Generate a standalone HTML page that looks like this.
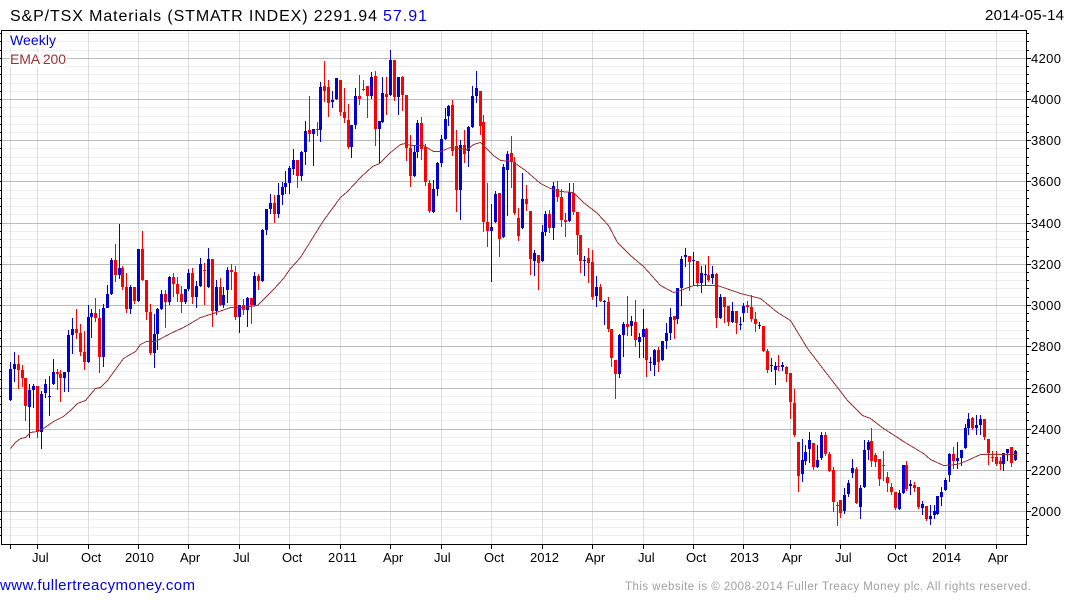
<!DOCTYPE html>
<html><head><meta charset="utf-8"><title>S&amp;P/TSX Materials</title>
<style>html,body{margin:0;padding:0;background:#fff}svg{display:block}text{font-family:"Liberation Sans",Arial,sans-serif}</style></head>
<body>
<svg xmlns="http://www.w3.org/2000/svg" width="1075" height="600" viewBox="0 0 1075 600">
<rect width="1075" height="600" fill="#fff"/>
<path fill="none" stroke="#eee" d="M2 33.5H1026M2 41.5H1026M2 50.5H1026M2 66.5H1026M2 74.5H1026M2 83.5H1026M2 91.5H1026M2 107.5H1026M2 116.5H1026M2 124.5H1026M2 132.5H1026M2 148.5H1026M2 157.5H1026M2 165.5H1026M2 173.5H1026M2 190.5H1026M2 198.5H1026M2 206.5H1026M2 214.5H1026M2 231.5H1026M2 239.5H1026M2 247.5H1026M2 256.5H1026M2 272.5H1026M2 280.5H1026M2 288.5H1026M2 297.5H1026M2 313.5H1026M2 321.5H1026M2 330.5H1026M2 338.5H1026M2 354.5H1026M2 363.5H1026M2 371.5H1026M2 379.5H1026M2 396.5H1026M2 404.5H1026M2 412.5H1026M2 420.5H1026M2 437.5H1026M2 445.5H1026M2 453.5H1026M2 461.5H1026M2 478.5H1026M2 486.5H1026M2 494.5H1026M2 502.5H1026M2 519.5H1026M2 527.5H1026M2 535.5H1026"/>
<path fill="none" stroke="#ddd" d="M10.5 31V544M37.5 31V544M88.5 31V544M138.5 31V544M188.5 31V544M239.5 31V544M289.5 31V544M340.5 31V544M390.5 31V544M441.5 31V544M491.5 31V544M542.5 31V544M592.5 31V544M643.5 31V544M693.5 31V544M743.5 31V544M790.5 31V544M840.5 31V544M895.5 31V544M945.5 31V544M996.5 31V544"/>
<path fill="none" stroke="#bbb" d="M2 58.5H1026M2 99.5H1026M2 140.5H1026M2 181.5H1026M2 223.5H1026M2 264.5H1026M2 305.5H1026M2 346.5H1026M2 388.5H1026M2 429.5H1026M2 470.5H1026M2 511.5H1026"/>
<rect x="10" y="33" width="47" height="15" fill="#fff"/>
<rect x="10" y="52" width="57" height="15" fill="#fff"/>
<path fill="none" stroke="#0000d8" d="M10.5 362V401M14.5 352V382M29.5 384V438M33.5 384V408M41.5 391V449M45.5 379V398M49.5 376V416M53.5 359V385M64.5 372V392M68.5 330V392M72.5 318V354M88.5 305V363M91.5 309V338M103.5 304V367M107.5 285V308M111.5 258V295M119.5 224V279M130.5 285V314M138.5 249V302M154.5 314V368M157.5 308V350M161.5 290V310M169.5 276V305M185.5 289V304M188.5 269V291M196.5 281V308M200.5 258V287M208.5 248V288M216.5 280V315M223.5 287V308M227.5 267V303M239.5 305V333M247.5 297V327M254.5 272V306M262.5 229V282M266.5 209V235M270.5 194V214M278.5 183V218M282.5 182V205M285.5 171V194M289.5 166V194M293.5 149V175M301.5 151V181M305.5 121V165M313.5 129V166M320.5 82V142M332.5 91V108M336.5 78V100M351.5 125V158M355.5 88V129M371.5 72V99M379.5 121V164M382.5 77V123M390.5 50V96M398.5 77V115M414.5 146V177M417.5 120V158M433.5 180V213M437.5 162V196M441.5 135V167M445.5 108V140M448.5 105V126M460.5 140V220M468.5 126V167M472.5 86V128M476.5 71V103M491.5 204V282M495.5 191V223M503.5 164V238M507.5 151V216M522.5 173V229M534.5 250V276M542.5 225V262M545.5 211V236M553.5 182V240M569.5 183V222M584.5 256V276M596.5 276V307M604.5 300V325M619.5 334V378M623.5 322V357M631.5 316V336M639.5 333V358M643.5 309V358M650.5 357V371M654.5 349V376M662.5 341V361M666.5 323V349M670.5 308V340M677.5 288V324M681.5 256V306M685.5 248V267M693.5 252V286M701.5 266V293M705.5 265V286M712.5 266V284M720.5 294V319M732.5 302V323M740.5 317V330M743.5 303V322M759.5 322V329M771.5 358V372M775.5 362V385M782.5 362V371M802.5 439V482M805.5 445V465M809.5 432V463M817.5 445V468M821.5 432V460M844.5 488V514M848.5 480V497M852.5 459V478M860.5 485V519M864.5 440V488M868.5 440V460M899.5 490V510M903.5 465V494M910.5 480V495M922.5 501V515M930.5 505V525M934.5 505V519M937.5 496V515M941.5 487V506M945.5 478V491M949.5 453V482M957.5 442V469M961.5 450V466M965.5 424V449M968.5 413V435M976.5 415V435M980.5 415V435M1003.5 453V471M1007.5 449V461M1015.5 450V461"/>
<path fill="none" stroke="#0000d8" stroke-width="3" d="M10.5 369V400M14.5 364V369M29.5 390V407M33.5 386V390M41.5 394V432M45.5 384V393M49.5 396V397M53.5 372V384M64.5 372V378M68.5 335V372M72.5 329V335M88.5 317V362M91.5 313V317M103.5 308V357M107.5 294V308M111.5 260V294M119.5 268V275M130.5 287V309M138.5 249V301M154.5 334V353M157.5 309V334M161.5 294V309M169.5 277V302M185.5 289V302M188.5 273V289M196.5 286V297M200.5 264V286M208.5 259V287M216.5 287V311M223.5 295V305M227.5 270V290M239.5 305V317M247.5 298V310M254.5 276V305M262.5 230V281M266.5 209V230M270.5 203V209M278.5 195V214M282.5 187V195M285.5 183V187M289.5 168V183M293.5 160V169M301.5 152V176M305.5 131V152M313.5 129V134M320.5 87V130M332.5 100V102M336.5 78V99M351.5 125V147M355.5 96V125M371.5 77V96M379.5 121V129M382.5 93V122M390.5 60V95M398.5 77V97M414.5 152V176M417.5 123V152M433.5 189V212M437.5 163V189M441.5 139V163M445.5 119V139M448.5 106V116M460.5 145V190M468.5 127V151M472.5 96V127M476.5 88V96M491.5 227V231M495.5 194V222M503.5 167V237M507.5 154V170M522.5 199V228M534.5 253V261M542.5 232V261M545.5 214V232M553.5 186V228M569.5 192V221M584.5 260V261M596.5 287V296M604.5 301V302M619.5 335V374M623.5 324V335M631.5 321V326M639.5 337V342M643.5 329V337M650.5 362V363M654.5 350V365M662.5 341V360M666.5 333V341M670.5 317V333M677.5 288V319M681.5 259V288M685.5 255V257M693.5 260V261M701.5 273V283M705.5 274V275M712.5 274V278M720.5 297V318M732.5 311V322M740.5 324V325M743.5 306V313M759.5 325V326M771.5 365V366M775.5 366V370M782.5 365V367M802.5 460V474M805.5 452V461M809.5 440V449M817.5 460V467M821.5 435V458M844.5 495V511M848.5 483V494M852.5 468V473M860.5 488V507M864.5 450V487M868.5 442V450M899.5 493V509M903.5 465V493M910.5 484V486M922.5 504V508M930.5 516V519M934.5 511V515M937.5 496V514M941.5 492V497M945.5 480V490M949.5 454V475M957.5 458V461M961.5 450V458M965.5 428V448M968.5 419V428M976.5 425V428M980.5 419V425M1003.5 453V464M1007.5 449V453M1015.5 451V460"/>
<path fill="none" stroke="#f00" d="M18.5 355V389M22.5 365V387M25.5 378V421M37.5 386V438M57.5 369V390M60.5 370V402M76.5 309V339M80.5 324V356M84.5 331V370M95.5 298V322M99.5 309V373M115.5 244V282M122.5 266V290M126.5 273V313M134.5 287V304M142.5 231V281M146.5 280V320M150.5 304V355M165.5 290V328M173.5 273V297M177.5 277V302M181.5 286V313M192.5 268V304M204.5 263V305M212.5 259V327M220.5 278V306M231.5 264V290M235.5 266V320M243.5 299V315M251.5 298V324M258.5 274V290M274.5 195V223M297.5 160V188M309.5 96V142M317.5 122V136M324.5 61V102M328.5 80V117M340.5 80V116M344.5 88V123M348.5 104V149M359.5 75V105M363.5 80V91M367.5 86V118M375.5 71V146M386.5 77V115M394.5 60V101M402.5 76V111M406.5 95V161M410.5 135V187M421.5 117V160M425.5 144V186M429.5 180V213M452.5 100V156M456.5 130V212M464.5 130V163M480.5 91V135M483.5 115V232M487.5 183V247M499.5 193V257M511.5 136V188M514.5 157V215M518.5 208V241M526.5 185V211M530.5 211V275M538.5 255V290M549.5 210V233M557.5 181V202M561.5 189V227M565.5 213V237M573.5 183V215M577.5 212V255M580.5 235V273M588.5 248V283M592.5 250V300M600.5 284V302M608.5 297V332M611.5 329V367M615.5 360V399M627.5 296V336M635.5 300V347M646.5 328V377M658.5 347V372M674.5 316V339M689.5 256V291M697.5 261V287M708.5 256V282M716.5 273V328M724.5 297V323M728.5 306V326M736.5 311V334M747.5 301V313M751.5 295V322M755.5 312V332M763.5 326V352M767.5 349V373M778.5 355V371M786.5 366V382M790.5 373V419M794.5 389V437M798.5 442V492M813.5 443V470M825.5 432V456M829.5 452V472M833.5 467V512M837.5 502V526M840.5 500V518M856.5 467V504M871.5 428V467M875.5 453V467M879.5 459V486M883.5 451V481M887.5 472V492M891.5 483V495M895.5 492V510M906.5 461V491M914.5 482V492M918.5 487V509M926.5 506V521M953.5 447V469M972.5 417V430M984.5 419V440M988.5 439V465M992.5 451V462M996.5 451V466M1000.5 457V470M1011.5 447V467"/>
<path fill="none" stroke="#f00" stroke-width="3" d="M18.5 364V370M22.5 370V378M25.5 378V406M37.5 386V432M57.5 372V374M60.5 374V378M76.5 329V333M80.5 333V352M84.5 352V362M95.5 313V318M99.5 318V357M115.5 260V275M122.5 268V287M126.5 287V309M134.5 287V301M142.5 249V280M146.5 280V312M150.5 312V353M165.5 294V302M173.5 277V284M177.5 284V294M181.5 294V302M192.5 273V297M204.5 270V271M212.5 259V311M220.5 287V305M231.5 270V272M235.5 272V317M243.5 305V310M251.5 298V305M258.5 276V281M274.5 203V214M297.5 160V176M309.5 130V134M317.5 129V130M324.5 86V91M328.5 87V103M340.5 80V112M344.5 112V118M348.5 120V147M359.5 96V99M363.5 89V90M367.5 86V96M375.5 76V129M386.5 94V97M394.5 60V97M402.5 77V95M406.5 95V148M410.5 148V176M421.5 123V149M425.5 147V182M429.5 183V211M452.5 105V151M456.5 146V190M464.5 145V154M480.5 91V126M483.5 122V222M487.5 222V231M499.5 193V239M511.5 153V161M514.5 162V213M518.5 218V236M526.5 199V204M530.5 211V259M538.5 255V263M549.5 214V228M557.5 189V197M561.5 197V220M565.5 220V222M573.5 193V212M577.5 212V235M580.5 235V261M588.5 258V263M592.5 262V297M600.5 287V301M608.5 302V329M611.5 329V358M615.5 360V374M627.5 324V327M635.5 322V340M646.5 329V360M658.5 350V362M674.5 316V320M689.5 256V262M697.5 261V283M708.5 275V280M716.5 274V318M724.5 297V307M728.5 306V322M736.5 311V323M747.5 305V307M751.5 307V319M755.5 319V324M763.5 326V351M767.5 351V370M778.5 366V367M786.5 367V374M790.5 373V402M794.5 403V435M798.5 442V476M813.5 443V467M825.5 435V454M829.5 454V471M833.5 470V502M837.5 505V506M840.5 500V513M856.5 469V503M871.5 441V461M875.5 455V462M879.5 459V479M883.5 465V466M887.5 477V483M891.5 487V492M895.5 492V508M906.5 465V489M914.5 485V488M918.5 487V507M926.5 506V519M953.5 454V461M972.5 418V428M984.5 419V437M988.5 439V453M992.5 457V458M996.5 457V464M1000.5 461V464M1011.5 447V463"/>
<polyline fill="none" stroke="#993333" stroke-width="1" shape-rendering="crispEdges" points="10.5,448.5 15.5,442.5 20.5,438.5 25.5,437.5 30.5,432.5 37.5,431.5 43.5,428.5 53.5,421.5 63.5,416.5 70.5,410.5 77.5,403.5 85.5,400.5 95.5,388.5 100.5,387.5 107.5,380.5 115.5,369.5 123.5,358.5 128.5,355.5 135.5,351.5 140.5,344.5 146.5,341.5 155.5,341.5 170.5,333.5 183.5,327.5 190.5,323.5 200.5,317.5 213.5,313.5 230.5,307.5 240.5,307.5 257.5,305.5 273.5,289.5 283.5,278.5 290.5,268.5 300.5,257.5 323.5,220.5 340.5,197.5 347.5,191.5 360.5,177.5 372.5,166.5 379.5,163.5 390.5,152.5 400.5,144.5 405.5,143.5 410.5,145.5 423.5,145.5 433.5,151.5 440.5,151.5 450.5,147.5 467.5,149.5 473.5,144.5 480.5,142.5 485.5,147.5 493.5,155.5 500.5,160.5 512.5,161.5 525.5,170.5 540.5,183.5 550.5,188.5 560.5,191.5 573.5,192.5 583.5,202.5 597.5,213.5 608.5,225.5 617.5,242.5 630.5,255.5 643.5,266.5 660.5,285.5 673.5,292.5 680.5,290.5 693.5,285.5 717.5,285.5 740.5,293.5 760.5,298.5 777.5,312.5 790.5,320.5 807.5,348.5 820.5,365.5 847.5,400.5 862.5,415.5 870.5,418.5 883.5,428.5 897.5,437.5 903.5,441.5 923.5,453.5 930.5,459.5 943.5,465.5 957.5,464.5 967.5,460.5 980.5,454.5 1017.5,454.5"/>
<path fill="none" stroke="#000" d="M1.5 31V544.5M1 30.5H1026.5V544.5H1M0 33.5H2M0 41.5H2M0 50.5H2M0 58.5H2M0 66.5H2M0 74.5H2M0 83.5H2M0 91.5H2M0 99.5H2M0 107.5H2M0 116.5H2M0 124.5H2M0 132.5H2M0 140.5H2M0 148.5H2M0 157.5H2M0 165.5H2M0 173.5H2M0 181.5H2M0 190.5H2M0 198.5H2M0 206.5H2M0 214.5H2M0 223.5H2M0 231.5H2M0 239.5H2M0 247.5H2M0 256.5H2M0 264.5H2M0 272.5H2M0 280.5H2M0 288.5H2M0 297.5H2M0 305.5H2M0 313.5H2M0 321.5H2M0 330.5H2M0 338.5H2M0 346.5H2M0 354.5H2M0 363.5H2M0 371.5H2M0 379.5H2M0 388.5H2M0 396.5H2M0 404.5H2M0 412.5H2M0 420.5H2M0 429.5H2M0 437.5H2M0 445.5H2M0 453.5H2M0 461.5H2M0 470.5H2M0 478.5H2M0 486.5H2M0 494.5H2M0 502.5H2M0 511.5H2M0 519.5H2M0 527.5H2M0 535.5H2"/>
<path fill="none" stroke="#000" d="M1027 33.5H1029M1027 41.5H1029M1027 50.5H1029M1027 58.5H1031M1027 66.5H1029M1027 74.5H1029M1027 83.5H1029M1027 91.5H1029M1027 99.5H1031M1027 107.5H1029M1027 116.5H1029M1027 124.5H1029M1027 132.5H1029M1027 140.5H1031M1027 148.5H1029M1027 157.5H1029M1027 165.5H1029M1027 173.5H1029M1027 181.5H1031M1027 190.5H1029M1027 198.5H1029M1027 206.5H1029M1027 214.5H1029M1027 223.5H1031M1027 231.5H1029M1027 239.5H1029M1027 247.5H1029M1027 256.5H1029M1027 264.5H1031M1027 272.5H1029M1027 280.5H1029M1027 288.5H1029M1027 297.5H1029M1027 305.5H1031M1027 313.5H1029M1027 321.5H1029M1027 330.5H1029M1027 338.5H1029M1027 346.5H1031M1027 354.5H1029M1027 363.5H1029M1027 371.5H1029M1027 379.5H1029M1027 388.5H1031M1027 396.5H1029M1027 404.5H1029M1027 412.5H1029M1027 420.5H1029M1027 429.5H1031M1027 437.5H1029M1027 445.5H1029M1027 453.5H1029M1027 461.5H1029M1027 470.5H1031M1027 478.5H1029M1027 486.5H1029M1027 494.5H1029M1027 502.5H1029M1027 511.5H1031M1027 519.5H1029M1027 527.5H1029M1027 535.5H1029"/>
<path fill="none" stroke="#000" d="M10.5 545V549M37.5 545V549M88.5 545V549M138.5 545V549M188.5 545V549M239.5 545V549M289.5 545V549M340.5 545V549M390.5 545V549M441.5 545V549M491.5 545V549M542.5 545V549M592.5 545V549M643.5 545V549M693.5 545V549M743.5 545V549M790.5 545V549M840.5 545V549M895.5 545V549M945.5 545V549M996.5 545V549"/>
<text x="10" y="21" font-size="16" textLength="367" fill="#000">S&amp;P/TSX Materials (STMATR INDEX) 2291.94</text>
<text x="383" y="21" font-size="16" textLength="44" fill="#0000d8">57.91</text>
<text x="985" y="20" font-size="15" textLength="79" fill="#000">2014-05-14</text>
<text x="10" y="45" font-size="14" textLength="46" fill="#0000d8">Weekly</text>
<text x="10" y="64" font-size="14" textLength="56" fill="#993333">EMA 200</text>
<g font-size="13" fill="#000">
<text x="1031" y="63" textLength="30">4200</text>
<text x="1031" y="104" textLength="30">4000</text>
<text x="1031" y="145" textLength="30">3800</text>
<text x="1031" y="186" textLength="30">3600</text>
<text x="1031" y="228" textLength="30">3400</text>
<text x="1031" y="269" textLength="30">3200</text>
<text x="1031" y="310" textLength="30">3000</text>
<text x="1031" y="351" textLength="30">2800</text>
<text x="1031" y="393" textLength="30">2600</text>
<text x="1031" y="434" textLength="30">2400</text>
<text x="1031" y="475" textLength="30">2200</text>
<text x="1031" y="516" textLength="30">2000</text>
<text x="32" y="562">Jul</text>
<text x="81" y="562">Oct</text>
<text x="125" y="562" textLength="29">2010</text>
<text x="180" y="562">Apr</text>
<text x="233" y="562">Jul</text>
<text x="282" y="562">Oct</text>
<text x="328" y="562" textLength="29">2011</text>
<text x="383" y="562">Apr</text>
<text x="434" y="562">Jul</text>
<text x="484" y="562">Oct</text>
<text x="530" y="562" textLength="29">2012</text>
<text x="585" y="562">Apr</text>
<text x="638" y="562">Jul</text>
<text x="686" y="562">Oct</text>
<text x="730" y="562" textLength="29">2013</text>
<text x="782" y="562">Apr</text>
<text x="835" y="562">Jul</text>
<text x="887" y="562">Oct</text>
<text x="932" y="562" textLength="29">2014</text>
<text x="988" y="562">Apr</text>
</g>
<text x="0" y="590" font-size="15" textLength="195" fill="#0000ee">www.fullertreacymoney.com</text>
<text x="625" y="590" font-size="11.5" textLength="406" fill="#a0a0a0">This website is © 2008-2014 Fuller Treacy Money plc. All rights reserved.</text>
</svg>
</body></html>
